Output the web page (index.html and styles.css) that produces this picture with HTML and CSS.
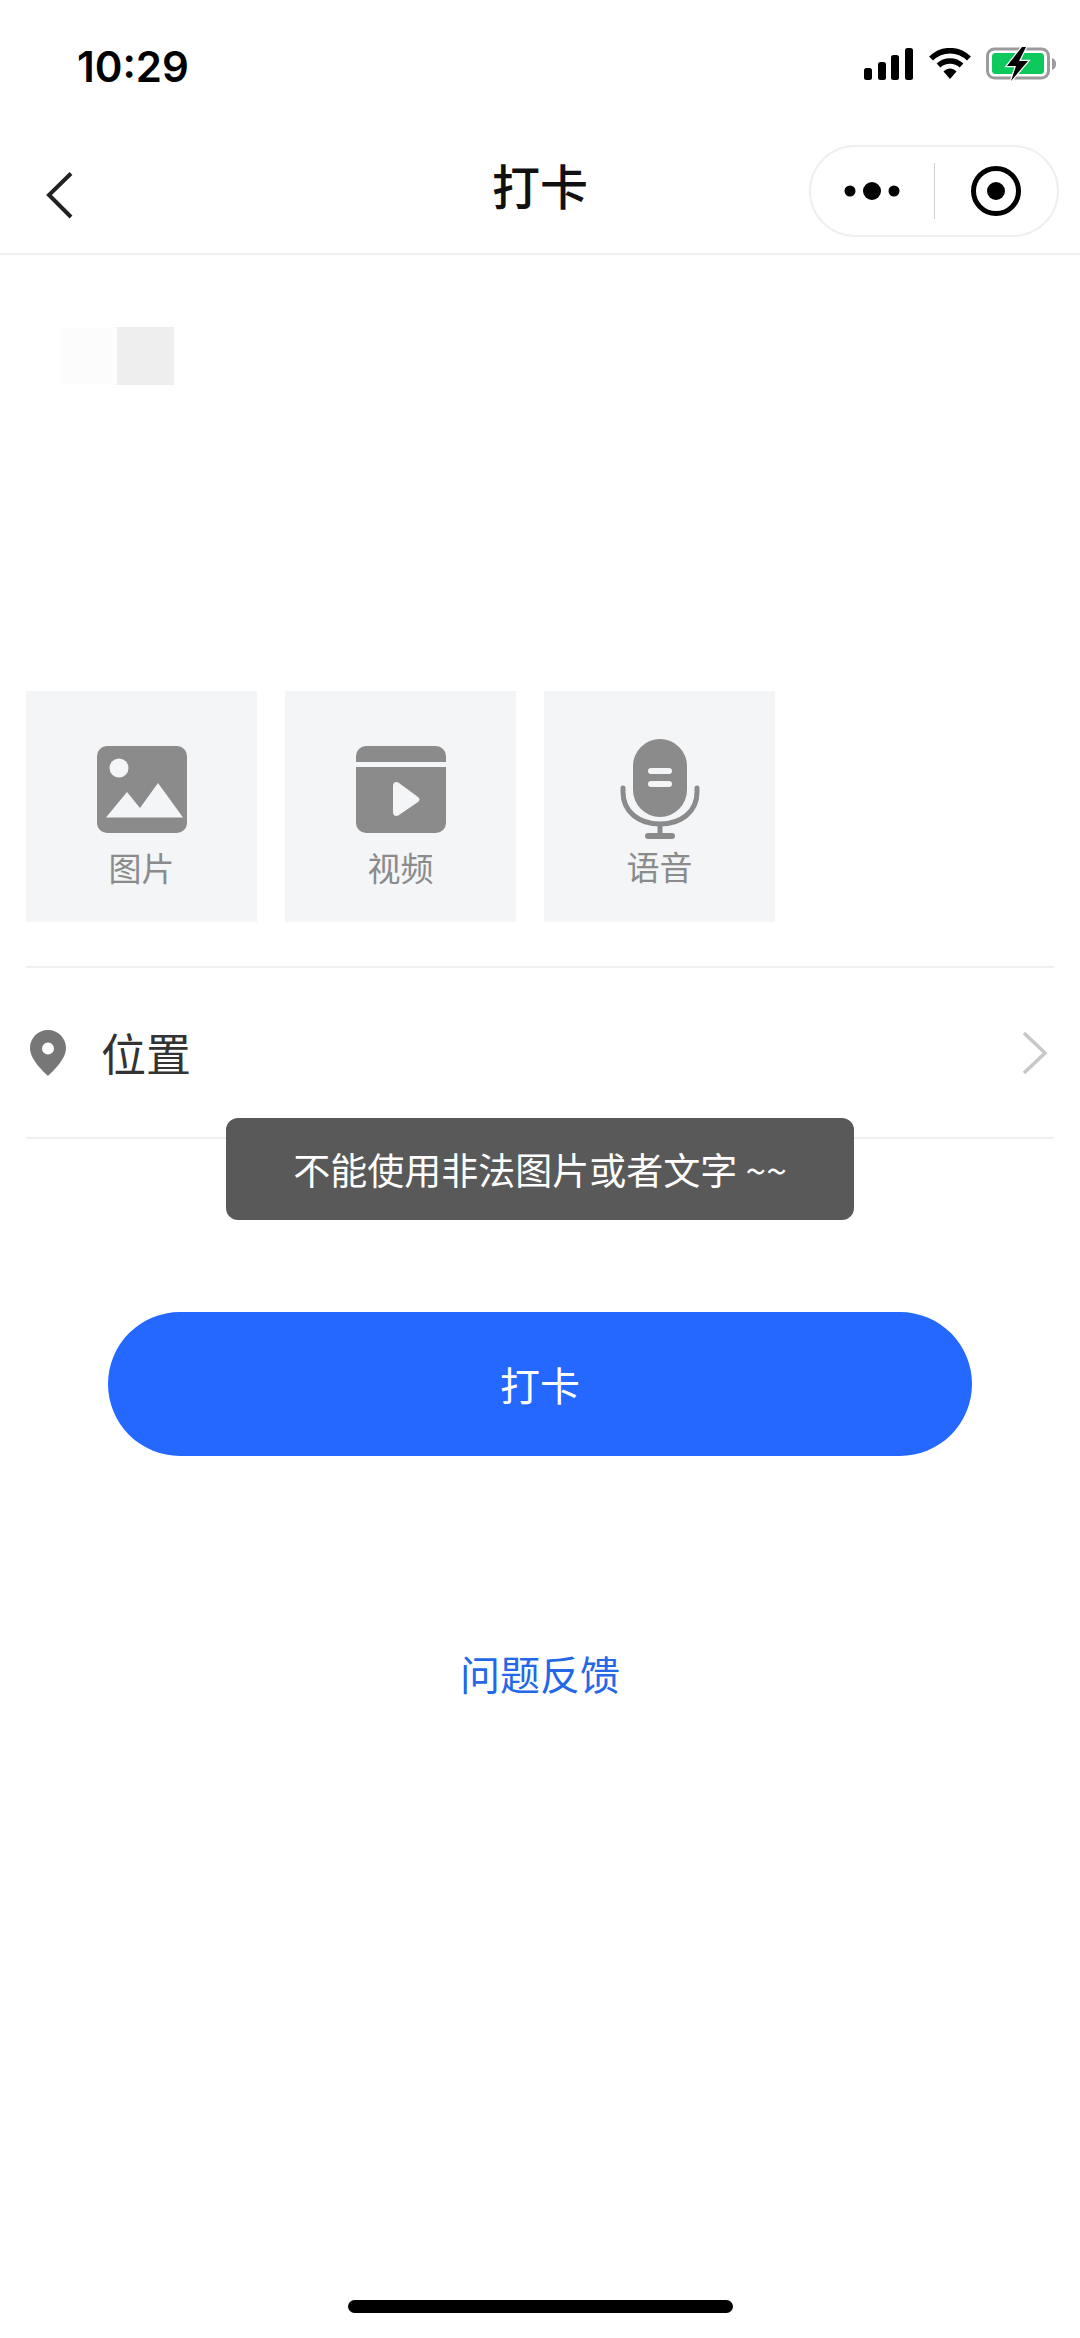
FILE: index.html
```html
<!DOCTYPE html>
<html lang="zh">
<head>
<meta charset="utf-8">
<title>打卡</title>
<link rel="stylesheet" href="styles.css">
</head>
<body>
<div class="phone">
  <header class="status">
    <span class="time">10:29</span>
    <div class="status-icons">
      <svg class="ic-signal" width="50" height="32" viewBox="0 0 50 32"><rect x="0" y="20" width="8" height="12" rx="2.5"/><rect x="14" y="14" width="8" height="18" rx="2.5"/><rect x="27" y="7" width="8" height="25" rx="2.5"/><rect x="41" y="0" width="8" height="32" rx="2.5"/></svg>
      <svg class="ic-wifi" width="44" height="32" viewBox="0 0 44 32"><path d="M3 10.5C14 0 30 0 41 10.5" fill="none" stroke="#000" stroke-width="5.5"/><path d="M10.500 17.500C17 11.500 27 11.500 33.500 17.500" fill="none" stroke="#000" stroke-width="5.500"/><path d="M15.500 23.500C19.500 19.500 24.500 19.500 28.500 23.500L22 31Z"/></svg>
      <svg class="ic-batt" width="72" height="34" viewBox="0 0 72 34"><rect x="1.500" y="2" width="61" height="29" rx="7" fill="none" stroke="#9b9b9b" stroke-width="3"/><rect x="6" y="6" width="52" height="21" rx="3.500" fill="#0dc95c"/><path d="M66 11c3 1 4 3 4 6s-1 5-4 6Z" fill="#9b9b9b"/><path d="M36 0L21 19h9l-5 15 17-20h-9l7-14Z" fill="#000" stroke="#fff" stroke-width="2.500" paint-order="stroke"/></svg>
    </div>
  </header>

  <nav class="navbar">
    <svg class="nav-back" width="30" height="50" viewBox="0 0 30 50"><path d="M26 2.500L4 24l22 22" fill="none" stroke="#222" stroke-width="4"/></svg>
    <h1 class="nav-title">打卡</h1>
    <div class="capsule">
      <div class="capsule-side">
        <svg width="56" height="20" viewBox="0 0 56 20"><circle cx="6" cy="10" r="5.500"/><circle cx="28" cy="10" r="9"/><circle cx="50" cy="10" r="5.500"/></svg>
      </div>
      <span class="capsule-rule"></span>
      <div class="capsule-side">
        <svg width="50" height="50" viewBox="0 0 50 50"><circle cx="25" cy="25" r="22.500" fill="none" stroke="#000" stroke-width="5"/><circle cx="25" cy="25" r="9"/></svg>
      </div>
    </div>
  </nav>

  <main class="content">
    <div class="text-field">
      <span class="ph ph-faint"></span><span class="ph ph-grey"></span>
    </div>

    <div class="uploads">
      <div class="tile">
        <svg class="tile-ic" width="92" height="88" viewBox="0 0 92 88"><rect x="1" y="1" width="90" height="87" rx="10" fill="#8b8b8b"/><circle cx="23" cy="23" r="9.500" fill="#f3f5f7"/><path d="M11 72.500L32 47l13 16 18-25 25 34.500Z" transform="translate(-1 0)" fill="#f3f5f7"/></svg>
        <span class="tile-label">图片</span>
      </div>
      <div class="tile">
        <svg class="tile-ic" width="92" height="88" viewBox="0 0 92 88"><path d="M1 17V11A10 10 0 0 1 11 1H81A10 10 0 0 1 91 11V17Z" fill="#8b8b8b"/><path d="M1 22H91V78A10 10 0 0 1 81 88H11A10 10 0 0 1 1 78Z" fill="#8b8b8b"/><path d="M38 41c0-4 3-5 6-3l19 14c2 2 2 3 0 5L44 70c-3 2-6 1-6-3Z" fill="#f3f5f7"/></svg>
        <span class="tile-label">视频</span>
      </div>
      <div class="tile tile-voice">
        <svg class="tile-ic" width="80" height="102" viewBox="0 0 80 102"><rect x="13" y="1" width="54" height="78" rx="27" fill="#8b8b8b"/><rect x="28" y="30" width="24" height="6" rx="3" fill="#f3f5f7"/><rect x="28" y="43" width="24" height="6" rx="3" fill="#f3f5f7"/><path d="M3 50V54C3 74 19 86 40 86S77 74 77 54V50" fill="none" stroke="#8b8b8b" stroke-width="5" stroke-linecap="round"/><path d="M40 86V97" stroke="#8b8b8b" stroke-width="5"/><rect x="25" y="95" width="30" height="6" rx="3" fill="#8b8b8b"/></svg>
        <span class="tile-label">语音</span>
      </div>
    </div>

    <div class="location">
      <svg class="pin" width="36" height="46" viewBox="0 0 36 46"><path fill-rule="evenodd" d="M18 0C8 0 0 8 0 18c0 11 12 22 18 28 6-6 18-17 18-28C36 8 28 0 18 0Zm0 12.500a6 6 0 1 1 0 12 6 6 0 0 1 0-12Z" fill="#777"/></svg>
      <span class="location-label">位置</span>
      <svg class="chev" width="26" height="44" viewBox="0 0 26 44"><path d="M2 2L23 22 2 42" fill="none" stroke="#c8c8c8" stroke-width="3.500"/></svg>
    </div>

    <button class="submit">打卡</button>
    <a class="feedback">问题反馈</a>
  </main>

  <div class="toast">不能使用非法图片或者文字 ~~</div>
  <div class="home-bar"></div>
</div>
</body>
</html>
```
FILE: styles.css
```css
* { box-sizing: border-box; }
html, body { margin: 0; padding: 0; }
body {
  background: #fff;
  font-family: "Noto Sans CJK SC", "Noto Sans", sans-serif;
}
.phone {
  position: relative;
  width: 1080px;
  height: 2338px;
  overflow: hidden;
  background: #fff;
}
.status {
  height: 132px;
  padding: 46px 22px 0 77px;
  display: flex;
  justify-content: space-between;
  align-items: flex-start;
}
.time {
  font-family: Inter, "Liberation Sans", sans-serif;
  font-size: 42px;
  font-weight: 600;
  line-height: 42px;
  color: #000;
}
.status-icons {
  display: flex;
  align-items: center;
  gap: 14px;
  margin-top: 1px;
}
.navbar {
  position: relative;
  height: 123px;
  border-bottom: 2px solid #f0f0f0;
  display: flex;
  align-items: center;
  justify-content: space-between;
  padding: 0 21px 0 45px;
}
.nav-back { margin-top: 6px; }
.nav-title {
  position: absolute;
  left: 0;
  right: 0;
  top: 20px;
  margin: 0;
  text-align: center;
  font-size: 48px;
  font-weight: 500;
  line-height: 64px;
  color: #111;
}
.capsule {
  width: 250px;
  height: 92px;
  margin-top: -3px;
  border: 2px solid #efefef;
  border-radius: 46px;
  display: flex;
  align-items: center;
}
.capsule-side {
  flex: 1;
  display: flex;
  justify-content: center;
  align-items: center;
}
.capsule-rule {
  width: 1px;
  height: 56px;
  background: #cfcfcf;
}
.content {
  display: flex;
  flex-direction: column;
  padding: 0 26px;
}
.text-field {
  height: 436px;
  padding: 72px 0 0 34px;
  display: flex;
  align-items: flex-start;
}
.ph { display: block; width: 57px; height: 58px; }
.ph-faint { background: #fcfcfc; }
.ph-grey { background: #eeeeee; }
.uploads {
  display: flex;
  gap: 28px;
  padding-bottom: 44px;
  border-bottom: 2px solid #f0f0f0;
}
.tile {
  width: 231px;
  height: 231px;
  background: #f3f5f7;
  display: flex;
  flex-direction: column;
  align-items: center;
  padding-top: 54px;
}
.tile-ic { flex: none; }
.tile-label {
  margin-top: 11px;
  font-size: 33px;
  line-height: 46px;
  color: #8b8b8b;
}
.tile-voice { padding-top: 47px; }
.tile-voice .tile-label { margin-top: 3px; }
.location {
  height: 171px;
  border-bottom: 2px solid #f0f0f0;
  display: flex;
  align-items: center;
  padding: 0 6px 0 4px;
}
.location-label {
  margin-left: 35px;
  font-size: 45px;
  line-height: 60px;
  color: #333;
}
.chev { margin-left: auto; }
.submit {
  align-self: center;
  width: 864px;
  height: 144px;
  margin-top: 173px;
  border: 0;
  border-radius: 72px;
  background: #2468ff;
  color: #fff;
  font-family: inherit;
  font-size: 40px;
  line-height: 54px;
}
.feedback {
  align-self: center;
  margin-top: 190px;
  font-size: 40px;
  line-height: 54px;
  color: #2468e8;
}
.toast {
  position: absolute;
  left: 226px;
  top: 1118px;
  width: 628px;
  height: 102px;
  border-radius: 12px;
  background: #595959;
  color: #fff;
  font-size: 37px;
  line-height: 102px;
  text-align: center;
  white-space: nowrap;
}
.home-bar {
  position: absolute;
  left: 348px;
  top: 2300px;
  width: 385px;
  height: 13px;
  border-radius: 7px;
  background: #000;
}
```
